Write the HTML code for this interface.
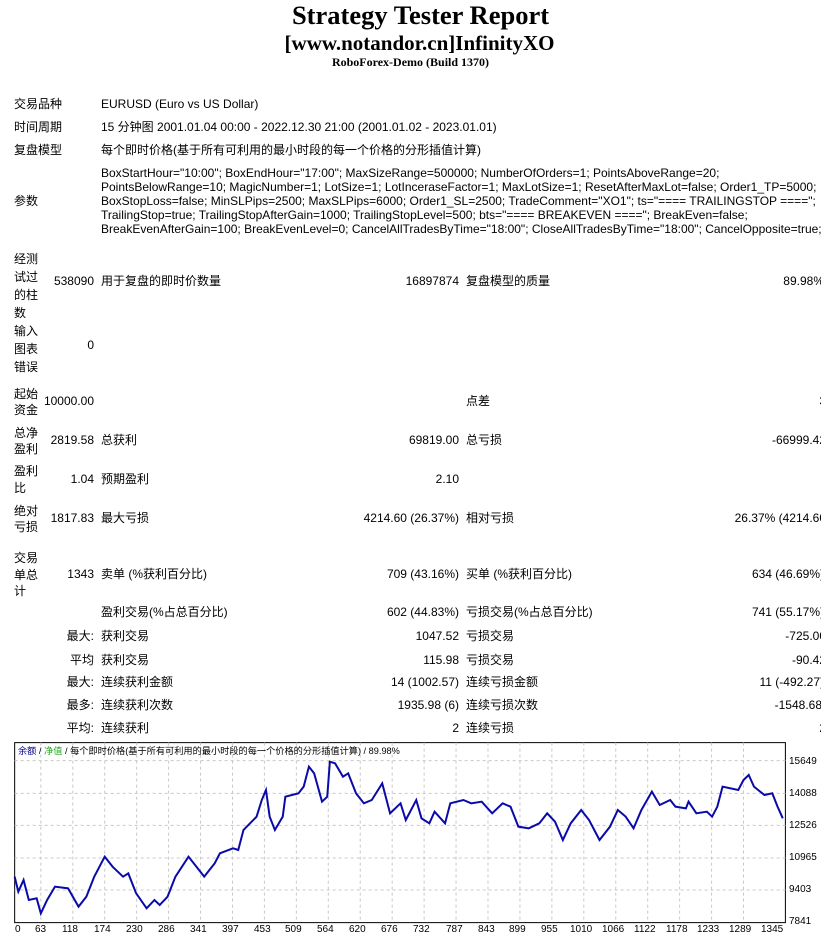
<!DOCTYPE html>
<html><head><meta charset="utf-8">
<style>
html,body{margin:0;padding:0;background:#fff;width:821px;height:936px;overflow:hidden;position:relative}
body{font-family:"Liberation Sans","Noto Sans CJK SC",sans-serif;font-size:12px;color:#000}
.t{position:absolute;white-space:nowrap;line-height:14px;letter-spacing:0}
.r{text-align:right}
.h{position:absolute;left:0;width:821px;text-align:center;font-family:"Liberation Serif",serif;font-weight:bold;white-space:nowrap}
.ax{position:absolute;font-size:10px;white-space:nowrap;line-height:12px}
</style></head><body>
<div class="h" style="top:0px;font-size:26.5px;left:10px">Strategy Tester Report</div>
<div class="h" style="top:31px;font-size:21px;left:9px">[www.notandor.cn]InfinityXO</div>
<div class="h" style="top:55px;font-size:12px">RoboForex-Demo (Build 1370)</div>

<div class="t" style="left:14px;top:97px">交易品种</div>
<div class="t" style="left:101px;top:97px">EURUSD (Euro vs US Dollar)</div>
<div class="t" style="left:14px;top:120px">时间周期</div>
<div class="t" style="left:101px;top:120px">15 分钟图 2001.01.04 00:00 - 2022.12.30 21:00 (2001.01.02 - 2023.01.01)</div>
<div class="t" style="left:14px;top:143px">复盘模型</div>
<div class="t" style="left:101px;top:143px">每个即时价格(基于所有可利用的最小时段的每一个价格的分形插值计算)</div>
<div class="t" style="left:14px;top:194px">参数</div>
<div class="t" style="left:101px;top:166px">BoxStartHour="10:00"; BoxEndHour="17:00"; MaxSizeRange=500000; NumberOfOrders=1; PointsAboveRange=20;</div>
<div class="t" style="left:101px;top:180px">PointsBelowRange=10; MagicNumber=1; LotSize=1; LotInceraseFactor=1; MaxLotSize=1; ResetAfterMaxLot=false; Order1_TP=5000;</div>
<div class="t" style="left:101px;top:194px">BoxStopLoss=false; MinSLPips=2500; MaxSLPips=6000; Order1_SL=2500; TradeComment="XO1"; ts="==== TRAILINGSTOP ====";</div>
<div class="t" style="left:101px;top:208px">TrailingStop=true; TrailingStopAfterGain=1000; TrailingStopLevel=500; bts="==== BREAKEVEN ===="; BreakEven=false;</div>
<div class="t" style="left:101px;top:222px">BreakEvenAfterGain=100; BreakEvenLevel=0; CancelAllTradesByTime="18:00"; CloseAllTradesByTime="18:00"; CancelOpposite=true;</div>

<div class="t" style="left:14px;top:250px;line-height:18px">经测<br>试过<br>的柱<br>数</div>
<div class="t r" style="left:0;width:94px;top:274px">538090</div>
<div class="t" style="left:101px;top:274px">用于复盘的即时价数量</div>
<div class="t r" style="left:300px;width:159px;top:274px">16897874</div>
<div class="t" style="left:466px;top:274px">复盘模型的质量</div>
<div class="t r" style="left:600px;width:224px;top:274px">89.98%</div>

<div class="t" style="left:14px;top:322px;line-height:18px">输入<br>图表<br>错误</div>
<div class="t r" style="left:0;width:94px;top:338px">0</div>

<div class="t" style="left:14px;top:386px;line-height:16px">起始<br>资金</div>
<div class="t r" style="left:0;width:94px;top:394px">10000.00</div>
<div class="t" style="left:466px;top:394px">点差</div>
<div class="t r" style="left:600px;width:226px;top:394px">3</div>

<div class="t" style="left:14px;top:425px;line-height:16px">总净<br>盈利</div>
<div class="t r" style="left:0;width:94px;top:433px">2819.58</div>
<div class="t" style="left:101px;top:433px">总获利</div>
<div class="t r" style="left:300px;width:159px;top:433px">69819.00</div>
<div class="t" style="left:466px;top:433px">总亏损</div>
<div class="t r" style="left:600px;width:226px;top:433px">-66999.42</div>

<div class="t" style="left:14px;top:463px;line-height:17px">盈利<br>比</div>
<div class="t r" style="left:0;width:94px;top:472px">1.04</div>
<div class="t" style="left:101px;top:472px">预期盈利</div>
<div class="t r" style="left:300px;width:159px;top:472px">2.10</div>

<div class="t" style="left:14px;top:503px;line-height:16px">绝对<br>亏损</div>
<div class="t r" style="left:0;width:94px;top:511px">1817.83</div>
<div class="t" style="left:101px;top:511px">最大亏损</div>
<div class="t r" style="left:300px;width:159px;top:511px">4214.60 (26.37%)</div>
<div class="t" style="left:466px;top:511px">相对亏损</div>
<div class="t r" style="left:600px;width:230px;top:511px">26.37% (4214.60)</div>

<div class="t" style="left:14px;top:550px;line-height:16.5px">交易<br>单总<br>计</div>
<div class="t r" style="left:0;width:94px;top:567px">1343</div>
<div class="t" style="left:101px;top:567px">卖单 (%获利百分比)</div>
<div class="t r" style="left:300px;width:159px;top:567px">709 (43.16%)</div>
<div class="t" style="left:466px;top:567px">买单 (%获利百分比)</div>
<div class="t r" style="left:600px;width:224px;top:567px">634 (46.69%)</div>

<div class="t" style="left:101px;top:605px">盈利交易(%占总百分比)</div>
<div class="t r" style="left:300px;width:159px;top:605px">602 (44.83%)</div>
<div class="t" style="left:466px;top:605px">亏损交易(%占总百分比)</div>
<div class="t r" style="left:600px;width:224px;top:605px">741 (55.17%)</div>

<div class="t r" style="left:0;width:94px;top:629px">最大:</div>
<div class="t" style="left:101px;top:629px">获利交易</div>
<div class="t r" style="left:300px;width:159px;top:629px">1047.52</div>
<div class="t" style="left:466px;top:629px">亏损交易</div>
<div class="t r" style="left:600px;width:226px;top:629px">-725.00</div>

<div class="t r" style="left:0;width:94px;top:653px">平均</div>
<div class="t" style="left:101px;top:653px">获利交易</div>
<div class="t r" style="left:300px;width:159px;top:653px">115.98</div>
<div class="t" style="left:466px;top:653px">亏损交易</div>
<div class="t r" style="left:600px;width:226px;top:653px">-90.42</div>

<div class="t r" style="left:0;width:94px;top:675px">最大:</div>
<div class="t" style="left:101px;top:675px">连续获利金额</div>
<div class="t r" style="left:300px;width:159px;top:675px">14 (1002.57)</div>
<div class="t" style="left:466px;top:675px">连续亏损金额</div>
<div class="t r" style="left:600px;width:224px;top:675px">11 (-492.27)</div>

<div class="t r" style="left:0;width:94px;top:698px">最多:</div>
<div class="t" style="left:101px;top:698px">连续获利次数</div>
<div class="t r" style="left:300px;width:159px;top:698px">1935.98 (6)</div>
<div class="t" style="left:466px;top:698px">连续亏损次数</div>
<div class="t r" style="left:600px;width:240px;top:698px">-1548.68 (5)</div>

<div class="t r" style="left:0;width:94px;top:721px">平均:</div>
<div class="t" style="left:101px;top:721px">连续获利</div>
<div class="t r" style="left:300px;width:159px;top:721px">2</div>
<div class="t" style="left:466px;top:721px">连续亏损</div>
<div class="t r" style="left:600px;width:226px;top:721px">2</div>

<svg style="position:absolute;left:0;top:740px" width="821" height="196" viewBox="0 0 1568 588" preserveAspectRatio="none">
<rect x="28" y="8" width="1472" height="540" fill="#fff" stroke="#000" stroke-width="1" vector-effect="non-scaling-stroke"/>
<g stroke="#c8c8c8" stroke-dasharray="3,3" stroke-width="1">
<line x1="28" x2="1500" y1="62" y2="62" vector-effect="non-scaling-stroke"/>
<line x1="28" x2="1500" y1="160" y2="160" vector-effect="non-scaling-stroke"/>
<line x1="28" x2="1500" y1="256" y2="256" vector-effect="non-scaling-stroke"/>
<line x1="28" x2="1500" y1="354" y2="354" vector-effect="non-scaling-stroke"/>
<line x1="28" x2="1500" y1="450" y2="450" vector-effect="non-scaling-stroke"/>
<line x1="78" x2="78" y1="8" y2="548" vector-effect="non-scaling-stroke"/>
<line x1="139" x2="139" y1="8" y2="548" vector-effect="non-scaling-stroke"/>
<line x1="200" x2="200" y1="8" y2="548" vector-effect="non-scaling-stroke"/>
<line x1="261" x2="261" y1="8" y2="548" vector-effect="non-scaling-stroke"/>
<line x1="322" x2="322" y1="8" y2="548" vector-effect="non-scaling-stroke"/>
<line x1="383" x2="383" y1="8" y2="548" vector-effect="non-scaling-stroke"/>
<line x1="444" x2="444" y1="8" y2="548" vector-effect="non-scaling-stroke"/>
<line x1="505" x2="505" y1="8" y2="548" vector-effect="non-scaling-stroke"/>
<line x1="566" x2="566" y1="8" y2="548" vector-effect="non-scaling-stroke"/>
<line x1="627" x2="627" y1="8" y2="548" vector-effect="non-scaling-stroke"/>
<line x1="688" x2="688" y1="8" y2="548" vector-effect="non-scaling-stroke"/>
<line x1="749" x2="749" y1="8" y2="548" vector-effect="non-scaling-stroke"/>
<line x1="810" x2="810" y1="8" y2="548" vector-effect="non-scaling-stroke"/>
<line x1="871" x2="871" y1="8" y2="548" vector-effect="non-scaling-stroke"/>
<line x1="932" x2="932" y1="8" y2="548" vector-effect="non-scaling-stroke"/>
<line x1="993" x2="993" y1="8" y2="548" vector-effect="non-scaling-stroke"/>
<line x1="1054" x2="1054" y1="8" y2="548" vector-effect="non-scaling-stroke"/>
<line x1="1115" x2="1115" y1="8" y2="548" vector-effect="non-scaling-stroke"/>
<line x1="1176" x2="1176" y1="8" y2="548" vector-effect="non-scaling-stroke"/>
<line x1="1237" x2="1237" y1="8" y2="548" vector-effect="non-scaling-stroke"/>
<line x1="1298" x2="1298" y1="8" y2="548" vector-effect="non-scaling-stroke"/>
<line x1="1359" x2="1359" y1="8" y2="548" vector-effect="non-scaling-stroke"/>
<line x1="1420" x2="1420" y1="8" y2="548" vector-effect="non-scaling-stroke"/>
</g>
<polyline fill="none" stroke="#0a0aa8" stroke-width="2" vector-effect="non-scaling-stroke" points="28,410 35,455 45,420 55,480 70,475 78,520 90,480 105,440 130,445 150,500 165,470 180,410 200,350 215,380 235,410 245,400 260,460 280,505 295,480 305,495 320,470 335,410 360,350 375,380 390,410 410,370 420,340 445,325 455,330 465,270 490,230 500,180 508,150 515,230 525,270 540,230 545,170 570,160 580,140 590,80 600,100 615,185 625,170 630,65 640,70 655,110 665,100 680,160 695,190 710,180 730,130 745,220 765,190 775,240 795,180 805,235 820,250 830,215 850,250 860,190 885,180 900,190 920,185 940,220 960,190 975,200 990,260 1010,265 1030,250 1045,220 1060,245 1075,300 1090,250 1110,210 1125,240 1145,300 1165,260 1180,210 1195,230 1210,265 1225,210 1245,155 1260,195 1280,180 1290,200 1310,205 1315,185 1330,220 1350,215 1360,230 1370,200 1380,140 1410,150 1420,120 1430,105 1440,140 1460,165 1475,160 1485,200 1495,235"/>
</svg>
<div class="ax" style="left:18px;top:745px;font-size:9.2px"><span style="color:#00008b">余额</span> / <span style="color:#2a2">净值</span> / 每个即时价格(基于所有可利用的最小时段的每一个价格的分形插值计算) / 89.98%</div>
<div class="ax" style="left:789px;top:756px">15649</div>
<div class="ax" style="left:789px;top:788px">14088</div>
<div class="ax" style="left:789px;top:820px">12526</div>
<div class="ax" style="left:789px;top:852px">10965</div>
<div class="ax" style="left:789px;top:884px">9403</div>
<div class="ax" style="left:789px;top:916px">7841</div>
<div class="ax" style="left:15px;top:924px">0</div>
<div class="ax" style="left:35px;top:924px">63</div>
<div class="ax" style="left:62px;top:924px">118</div>
<div class="ax" style="left:94px;top:924px">174</div>
<div class="ax" style="left:126px;top:924px">230</div>
<div class="ax" style="left:158px;top:924px">286</div>
<div class="ax" style="left:190px;top:924px">341</div>
<div class="ax" style="left:222px;top:924px">397</div>
<div class="ax" style="left:254px;top:924px">453</div>
<div class="ax" style="left:285px;top:924px">509</div>
<div class="ax" style="left:317px;top:924px">564</div>
<div class="ax" style="left:349px;top:924px">620</div>
<div class="ax" style="left:381px;top:924px">676</div>
<div class="ax" style="left:413px;top:924px">732</div>
<div class="ax" style="left:446px;top:924px">787</div>
<div class="ax" style="left:478px;top:924px">843</div>
<div class="ax" style="left:509px;top:924px">899</div>
<div class="ax" style="left:541px;top:924px">955</div>
<div class="ax" style="left:570px;top:924px">1010</div>
<div class="ax" style="left:602px;top:924px">1066</div>
<div class="ax" style="left:634px;top:924px">1122</div>
<div class="ax" style="left:666px;top:924px">1178</div>
<div class="ax" style="left:697px;top:924px">1233</div>
<div class="ax" style="left:729px;top:924px">1289</div>
<div class="ax" style="left:761px;top:924px">1345</div>
</body></html>
